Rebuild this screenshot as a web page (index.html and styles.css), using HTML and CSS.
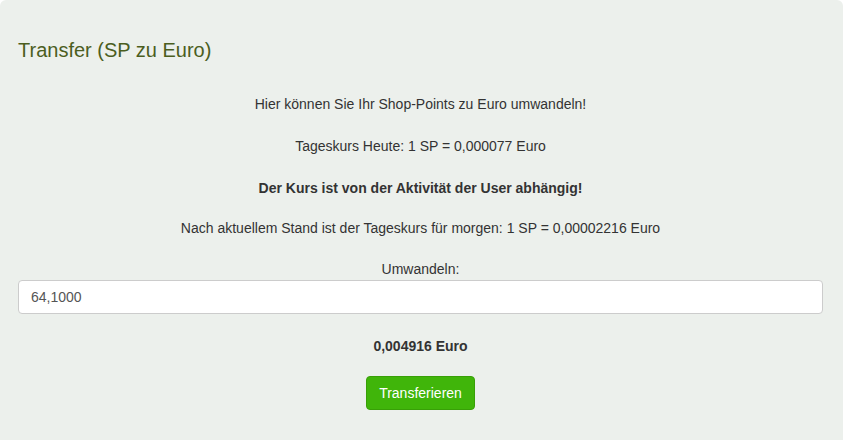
FILE: index.html
```html
<!DOCTYPE html>
<html lang="de">
<head>
    <meta charset="UTF-8">
    <meta name="viewport" content="width=device-width, initial-scale=1.0">
    <title>Transfer (SP zu Euro)</title>
    <link rel="stylesheet" href="styles.css">
</head>
<body>
    <div class="panel">
        <h3 class="panel-title">Transfer (SP zu Euro)</h3>

        <div class="panel-body">
            <p>Hier können Sie Ihr Shop-Points zu Euro umwandeln!</p>
            <p>Tageskurs Heute: 1 SP = 0,000077 Euro</p>
            <p class="note"><b>Der Kurs ist von der Aktivität der User abhängig!</b></p>
            <p class="forecast">Nach aktuellem Stand ist der Tageskurs für morgen: 1 SP = 0,00002216 Euro</p>

            <form class="transfer-form" onsubmit="return false;">
                <label for="umwandeln">Umwandeln:</label>
                <input type="text" id="umwandeln" name="umwandeln" value="64,1000">
                <p class="result"><b>0,004916 Euro</b></p>
                <button type="submit" class="btn-green">Transferieren</button>
            </form>
        </div>
    </div>
</body>
</html>
```

FILE: styles.css
```css
body {
    font-family: Arial, "Liberation Sans", sans-serif;
    font-size: 14px;
    line-height: 20px;
    color: #333;
    margin: 0;
    padding: 0;
    background-color: #fff;
}
.panel {
    width: 843px;
    height: 446px;
    box-sizing: border-box;
    padding: 0 20px 0 18px;
    background-color: #ecf0ec;
    border-radius: 6px;
}
.panel-title {
    margin: 0;
    padding-top: 38px;
    font-size: 20px;
    line-height: 24px;
    font-weight: normal;
    color: #4b5e1e;
}
.panel-body {
    text-align: center;
    padding-top: 32px;
}
.panel-body p {
    margin: 0 0 22px;
}
.panel-body .note {
    margin-bottom: 20px;
}
.panel-body .forecast {
    margin-bottom: 21px;
}
.transfer-form label {
    display: block;
    margin-bottom: 1px;
    font-weight: normal;
}
.transfer-form input[type="text"] {
    display: block;
    width: 100%;
    height: 34px;
    box-sizing: border-box;
    padding: 6px 12px;
    font-family: inherit;
    font-size: 14px;
    color: #555;
    background-color: #fff;
    border: 1px solid #ccc;
    border-radius: 4px;
}
.transfer-form .result {
    margin: 22px 0 20px;
}
.btn-green {
    padding: 6px 12px;
    height: 34px;
    font-family: inherit;
    font-size: 14px;
    color: #fff;
    background-color: #40b50a;
    border: 1px solid #38a007;
    border-radius: 4px;
    cursor: pointer;
}
```
